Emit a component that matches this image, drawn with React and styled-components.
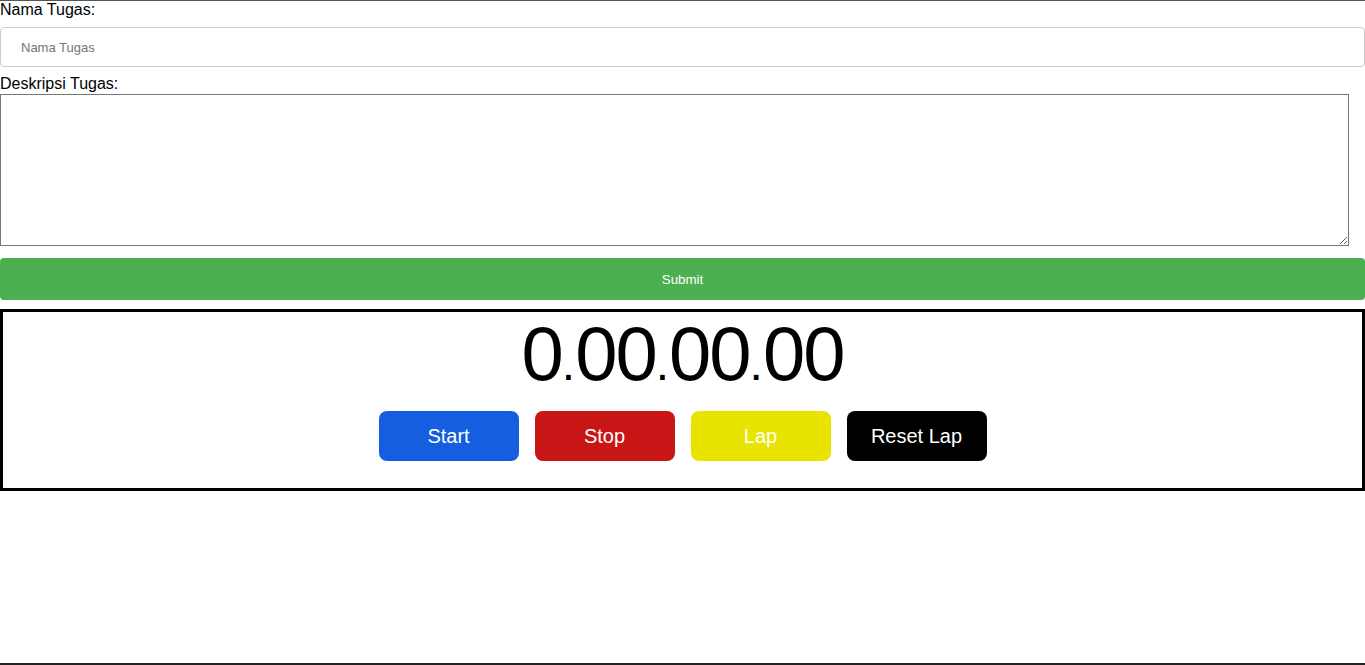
import React, { useState } from "react";
import styled, { createGlobalStyle } from "styled-components";

const GlobalStyle = createGlobalStyle`
  html, body {
    margin: 0;
    padding: 0;
    background: #fff;
  }
  body {
    font-family: "Liberation Sans", Arial, sans-serif;
    color: #000;
  }
  * {
    box-sizing: border-box;
  }
`;

const Page = styled.div`
  min-height: 100vh;
  border-top: 1px solid #555;
  border-bottom: 2px solid #222;
`;

const Form = styled.form`
  display: flex;
  flex-direction: column;
`;

const Label = styled.label`
  display: block;
  font-size: 16px;
  line-height: 18px;
  margin-top: ${(p) => p.$top || 0}px;
`;

const TextInput = styled.input`
  display: block;
  width: 100%;
  height: 40px;
  margin-top: 8px;
  padding: 0 20px;
  border: 1px solid #ccc;
  border-radius: 4px;
  font-family: "Liberation Sans", Arial, sans-serif;
  font-size: 13px;
  outline: none;

  &::placeholder {
    color: #757575;
  }
`;

const TextArea = styled.textarea`
  display: block;
  width: 1349px;
  height: 152px;
  margin: 1px 0 0;
  border: 1px solid #767676;
  font-family: "Liberation Mono", monospace;
  font-size: 13px;
`;

const SubmitButton = styled.button`
  display: block;
  width: 100%;
  height: 42px;
  margin-top: 12px;
  border: none;
  border-radius: 4px;
  background: #4caf50;
  color: #fff;
  font-family: "Liberation Sans", Arial, sans-serif;
  font-size: 13.33px;
  cursor: pointer;
`;

const Stopwatch = styled.section`
  margin-top: 9px;
  border: 3px solid #000;
  padding: 3px 0 27px;
  display: flex;
  flex-direction: column;
  align-items: center;
`;

const Time = styled.div`
  font-family: "Liberation Sans", Arial, sans-serif;
  font-size: 76px;
  line-height: 78px;
  height: 78px;
  letter-spacing: -2px;
  color: #000;
`;

const Dot = styled.span`
  font-size: 48px;
  line-height: 0;
  letter-spacing: 0;
`;

const Controls = styled.div`
  display: flex;
  gap: 16px;
  margin-top: 18px;
`;

const Button = styled.button`
  width: 140px;
  height: 50px;
  border: none;
  border-radius: 8px;
  background: ${(p) => p.$bg};
  color: #fff;
  font-family: "Liberation Sans", Arial, sans-serif;
  font-size: 20px;
  cursor: pointer;
`;

const pad = (n) => String(n).padStart(2, "0");

export default function App() {
  const [elapsed] = useState(0);
  const h = Math.floor(elapsed / 3600000);
  const m = Math.floor(elapsed / 60000) % 60;
  const s = Math.floor(elapsed / 1000) % 60;
  const cs = Math.floor(elapsed / 10) % 100;
  const parts = [String(h), pad(m), pad(s), pad(cs)];

  return (
    <Page>
      <GlobalStyle />
      <Form onSubmit={(e) => e.preventDefault()}>
        <Label htmlFor="nama">Nama Tugas:</Label>
        <TextInput id="nama" type="text" placeholder="Nama Tugas" />
        <Label htmlFor="deskripsi" $top={8}>
          Deskripsi Tugas:
        </Label>
        <TextArea id="deskripsi" />
        <SubmitButton type="submit">Submit</SubmitButton>
      </Form>

      <Stopwatch>
        <Time>
          {parts.map((p, i) => (
            <React.Fragment key={i}>
              {i > 0 && <Dot>.</Dot>}
              {p}
            </React.Fragment>
          ))}
        </Time>
        <Controls>
          <Button $bg="#155ee0">Start</Button>
          <Button $bg="#c81515">Stop</Button>
          <Button $bg="#e8e400">Lap</Button>
          <Button $bg="#000">Reset Lap</Button>
        </Controls>
      </Stopwatch>
    </Page>
  );
}
